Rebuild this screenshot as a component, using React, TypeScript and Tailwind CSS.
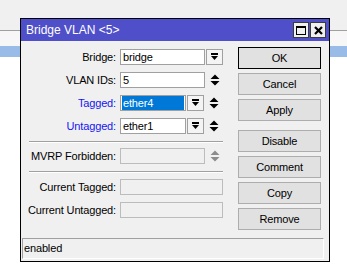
import React from "react";

const DropIcon = () => (
  <svg width="9" height="8" viewBox="0 0 9 8">
    <rect x="1" y="0" width="7" height="2" fill="#000" />
    <path d="M1 3h7L4.5 7z" fill="#000" />
  </svg>
);

const UpDownIcon = ({ color = "#000" }: { color?: string }) => (
  <svg width="10" height="12" viewBox="0 0 10 12">
    <path d="M5 0.5L9.5 5H0.5z M0.5 7h9L5 11.5z" fill={color} />
  </svg>
);

const DropButton = () => (
  <div className="w-[17px] h-[16px] ml-px border border-[#a0a0a0] bg-[#f4f4f4] flex items-center justify-center">
    <DropIcon />
  </div>
);

const Spinner = ({ color }: { color?: string }) => (
  <div className="w-[20px] h-[16px] flex items-center justify-center">
    <UpDownIcon color={color} />
  </div>
);

interface FieldProps {
  value?: string;
  width: string;
  selected?: boolean;
  disabled?: boolean;
}

const Field = ({ value, width, selected, disabled }: FieldProps) => (
  <div
    className={
      "h-[16px] border flex items-center px-px leading-none " +
      width +
      (disabled ? " bg-[#f0f0f0] border-[#bcbcbc]" : " bg-white border-[#a0a0a0]")
    }
  >
    {value && (
      <span
        className={
          "h-full w-full flex items-center pl-px " +
          (selected ? "bg-[#0078d7] text-white" : "text-black")
        }
      >
        {value}
      </span>
    )}
  </div>
);

const Row = ({
  label,
  blue,
  children,
  className = "",
}: {
  label: string;
  blue?: boolean;
  children: React.ReactNode;
  className?: string;
}) => (
  <div className={"flex items-center h-[16px] " + className}>
    <div
      className={
        "w-[95px] mr-[4px] text-right whitespace-nowrap " +
        (blue ? "text-[#1515f0]" : "text-black")
      }
    >
      {label}
    </div>
    {children}
  </div>
);

const Separator = ({ className = "" }: { className?: string }) => (
  <div className={"ml-[8px] w-[194px] border-t border-[#a0a0a0] border-b border-b-white " + className} />
);

const ActionButton = ({
  label,
  primary,
  className = "",
}: {
  label: string;
  primary?: boolean;
  className?: string;
}) => (
  <div
    className={
      "h-[22px] w-[83px] flex items-center justify-center bg-[#e1e1e1] border text-black " +
      (primary ? "border-black " : "border-[#adadad] ") +
      className
    }
  >
    {label}
  </div>
);

export default function App() {
  return (
    <div className="relative w-[347px] h-[266px] bg-white overflow-hidden font-['Liberation_Sans',Arial,sans-serif] text-[11px] tracking-[-0.15px]">
      <div className="h-[30px] bg-[#f0f0f0]" />
      <div className="h-px bg-[#a0a0a0]" />
      <div className="h-[15px] bg-[#f7f7f7]" />
      <div className="h-[11px] bg-[#99bbe8]" />

      {/* dialog window */}
      <div className="absolute left-[20px] top-[18px] w-[310px] h-[244px] border border-black bg-[#f0f0f0] flex flex-col">
        <div className="h-[22px] bg-[#4f4fc9] flex items-center justify-between pl-[5px] pr-[3px]">
          <span className="text-white text-[12px] leading-none tracking-normal">Bridge VLAN &lt;5&gt;</span>
          <div className="flex gap-px">
            <div className="w-[16px] h-[16px] bg-[#f0f0f0] border border-[#3c3c3c] flex items-center justify-center">
              <div className="w-[10px] h-[9px] border border-black border-t-2" />
            </div>
            <div className="w-[16px] h-[16px] bg-[#f0f0f0] border border-[#3c3c3c] flex items-center justify-center">
              <svg width="9" height="9" viewBox="0 0 9 9">
                <path d="M1 1L8 8M8 1L1 8" stroke="#000" strokeWidth="2.2" />
              </svg>
            </div>
          </div>
        </div>

        <div className="flex flex-1">
          <div className="w-[217px] flex flex-col pt-[8px]">
            <Row label="Bridge:">
              <Field value="bridge" width="w-[85px]" />
              <DropButton />
            </Row>
            <Row label="VLAN IDs:" className="mt-[7px]">
              <Field value="5" width="w-[85px]" />
              <Spinner />
            </Row>
            <Row label="Tagged:" blue className="mt-[7px]">
              <Field value="ether4" width="w-[66px]" selected />
              <DropButton />
              <Spinner />
            </Row>
            <Row label="Untagged:" blue className="mt-[7px]">
              <Field value="ether1" width="w-[66px]" />
              <DropButton />
              <Spinner />
            </Row>
            <Separator className="mt-[7px]" />
            <Row label="MVRP Forbidden:" className="mt-[5px]">
              <Field width="w-[85px]" disabled />
              <Spinner color="#8c8c8c" />
            </Row>
            <Separator className="mt-[7px]" />
            <Row label="Current Tagged:" className="mt-[6px]">
              <Field width="w-[103px]" disabled />
            </Row>
            <Row label="Current Untagged:" className="mt-[7px]">
              <Field width="w-[103px]" disabled />
            </Row>
          </div>

          <div className="flex flex-col pt-[6px] gap-[4px]">
            <ActionButton label="OK" primary />
            <ActionButton label="Cancel" />
            <ActionButton label="Apply" />
            <ActionButton label="Disable" className="mt-[5px]" />
            <ActionButton label="Comment" />
            <ActionButton label="Copy" />
            <ActionButton label="Remove" />
          </div>
        </div>

        <div className="ml-px mr-[5px] mb-[2px] h-[21px] border border-[#a0a0a0] border-r-white border-b-white flex items-center pl-px text-black">
          enabled
        </div>
      </div>
    </div>
  );
}
